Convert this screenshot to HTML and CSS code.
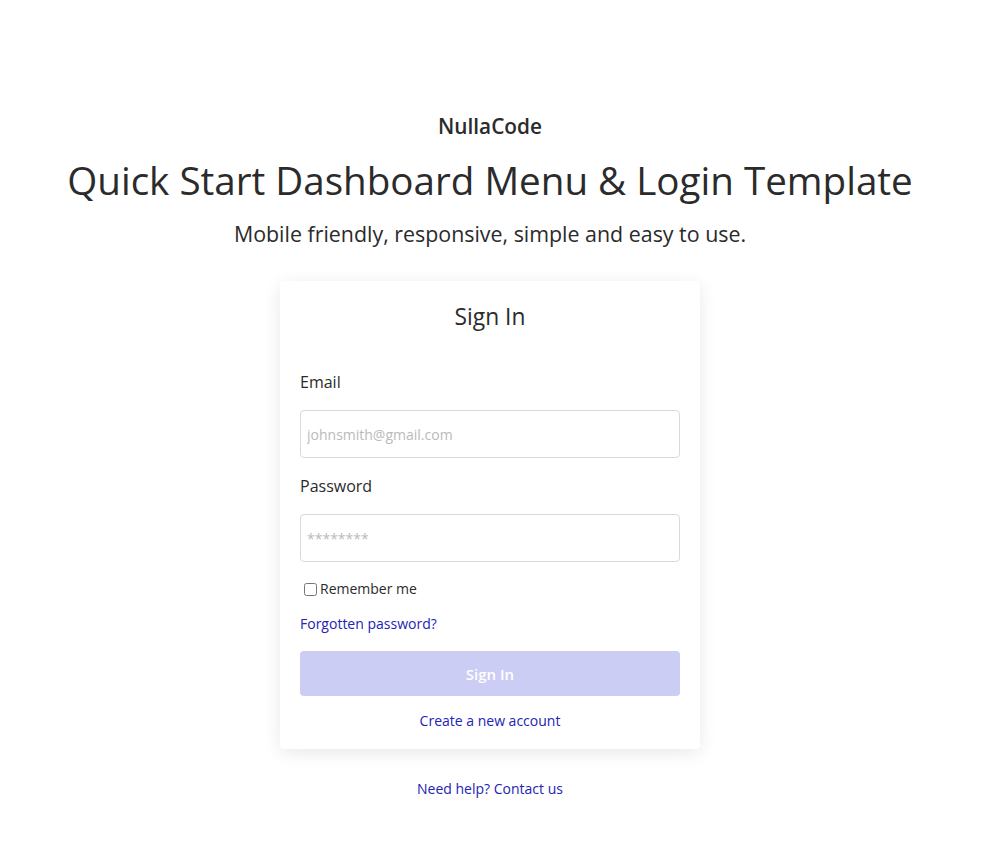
FILE: index.html
```html
<!DOCTYPE html>
<html lang="en">
<head>
<meta charset="utf-8">
<title>NullaCode</title>
<link rel="stylesheet" href="styles.css">
</head>
<body>
<div class="page">
  <header class="intro">
    <div class="brand">NullaCode</div>
    <h1 class="title">Quick Start Dashboard Menu &amp; Login Template</h1>
    <p class="subtitle">Mobile friendly, responsive, simple and easy to use.</p>
  </header>
  <form class="card">
    <h2 class="card-title">Sign In</h2>
    <label class="label" for="email">Email</label>
    <input class="input" id="email" type="email" placeholder="johnsmith@gmail.com">
    <label class="label" for="pw">Password</label>
    <input class="input" id="pw" type="password" placeholder="********">
    <label class="remember"><input type="checkbox" class="check">Remember me</label>
    <a class="link forgot" href="#">Forgotten password?</a>
    <button class="btn" type="button">Sign In</button>
    <a class="link create" href="#">Create a new account</a>
  </form>
  <a class="link help" href="#">Need help? Contact us</a>
</div>
</body>
</html>
```
FILE: styles.css
```css
* { box-sizing: border-box; }
html, body { margin: 0; padding: 0; background: #fff; }
body {
  font-family: "Open Sans", "Noto Sans", sans-serif;
  color: #2b2b2b;
}
.page {
  width: 980px;
  padding-top: 112px;
  display: flex;
  flex-direction: column;
  align-items: center;
}
.intro { text-align: center; }
.brand {
  font-size: 20.8px;
  font-weight: 600;
  line-height: 28px;
}
.title {
  margin: 12px 0 0;
  font-size: 38.6px;
  font-weight: 400;
  line-height: 56px;
}
.subtitle {
  margin: 11px 0 0;
  font-size: 21.4px;
  line-height: 30px;
}
.card {
  margin-top: 32px;
  width: 420px;
  padding: 19px 20px 18px;
  background: #fff;
  border-radius: 4px;
  box-shadow: 0 4px 18px rgba(0,0,0,0.09);
  display: flex;
  flex-direction: column;
}
.card-title {
  margin: 0;
  text-align: center;
  font-size: 22.8px;
  font-weight: 400;
  line-height: 34px;
}
.label {
  margin-top: 37px;
  font-size: 16px;
  line-height: 22px;
}
.label + .input { margin-top: 17px; }
.input + .label { margin-top: 17px; }
.input {
  height: 48px;
  width: 100%;
  border: 1px solid #d9d9d9;
  border-radius: 4px;
  padding: 0 6px;
  font-family: inherit;
  font-size: 14px;
  color: #333;
  outline: none;
}
.input::placeholder { color: #bababa; }
.remember {
  margin-top: 18px;
  display: flex;
  align-items: center;
  font-size: 14px;
  line-height: 18px;
  padding-left: 3px;
}
.check {
  margin: 0 3px 0 1px;
  width: 13px;
  height: 13px;
}
.link {
  color: #2323b4;
  text-decoration: none;
  font-size: 14px;
  line-height: 20px;
}
.forgot { margin-top: 16px; }
.btn {
  margin-top: 17px;
  height: 45px;
  width: 100%;
  border: none;
  border-radius: 4px;
  background: #cccdf4;
  color: #fff;
  font-family: inherit;
  font-size: 15px;
  font-weight: 600;
}
.create {
  margin-top: 15px;
  align-self: center;
}
.help {
  margin-top: 30px;
}
```
